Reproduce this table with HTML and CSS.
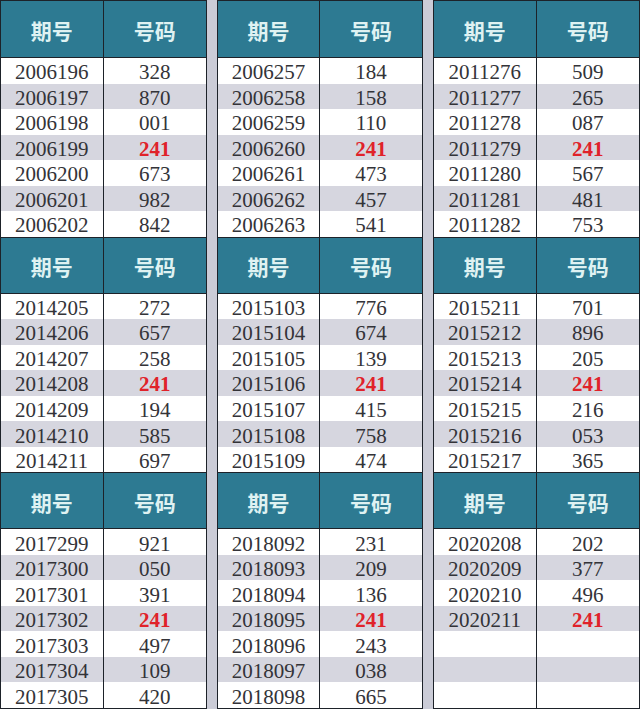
FILE: index.html
```html
<!DOCTYPE html>
<html lang="zh">
<head>
<meta charset="utf-8">
<link rel="stylesheet" href="styles.css">
</head>
<body>
<div class="page">
  <div class="col">
    <div class="block">
      <div class="hd">期号</div><div class="hd">号码</div>
      <div class="c">2006196</div><div class="c">328</div>
      <div class="c g">2006197</div><div class="c g">870</div>
      <div class="c">2006198</div><div class="c">001</div>
      <div class="c g">2006199</div><div class="c g r">241</div>
      <div class="c">2006200</div><div class="c">673</div>
      <div class="c g">2006201</div><div class="c g">982</div>
      <div class="c">2006202</div><div class="c">842</div>
    </div>
    <div class="block">
      <div class="hd">期号</div><div class="hd">号码</div>
      <div class="c">2014205</div><div class="c">272</div>
      <div class="c g">2014206</div><div class="c g">657</div>
      <div class="c">2014207</div><div class="c">258</div>
      <div class="c g">2014208</div><div class="c g r">241</div>
      <div class="c">2014209</div><div class="c">194</div>
      <div class="c g">2014210</div><div class="c g">585</div>
      <div class="c">2014211</div><div class="c">697</div>
    </div>
    <div class="block">
      <div class="hd">期号</div><div class="hd">号码</div>
      <div class="c">2017299</div><div class="c">921</div>
      <div class="c g">2017300</div><div class="c g">050</div>
      <div class="c">2017301</div><div class="c">391</div>
      <div class="c g">2017302</div><div class="c g r">241</div>
      <div class="c">2017303</div><div class="c">497</div>
      <div class="c g">2017304</div><div class="c g">109</div>
      <div class="c">2017305</div><div class="c">420</div>
    </div>
  </div>
  <div class="col mid">
    <div class="block">
      <div class="hd">期号</div><div class="hd">号码</div>
      <div class="c">2006257</div><div class="c">184</div>
      <div class="c g">2006258</div><div class="c g">158</div>
      <div class="c">2006259</div><div class="c">110</div>
      <div class="c g">2006260</div><div class="c g r">241</div>
      <div class="c">2006261</div><div class="c">473</div>
      <div class="c g">2006262</div><div class="c g">457</div>
      <div class="c">2006263</div><div class="c">541</div>
    </div>
    <div class="block">
      <div class="hd">期号</div><div class="hd">号码</div>
      <div class="c">2015103</div><div class="c">776</div>
      <div class="c g">2015104</div><div class="c g">674</div>
      <div class="c">2015105</div><div class="c">139</div>
      <div class="c g">2015106</div><div class="c g r">241</div>
      <div class="c">2015107</div><div class="c">415</div>
      <div class="c g">2015108</div><div class="c g">758</div>
      <div class="c">2015109</div><div class="c">474</div>
    </div>
    <div class="block">
      <div class="hd">期号</div><div class="hd">号码</div>
      <div class="c">2018092</div><div class="c">231</div>
      <div class="c g">2018093</div><div class="c g">209</div>
      <div class="c">2018094</div><div class="c">136</div>
      <div class="c g">2018095</div><div class="c g r">241</div>
      <div class="c">2018096</div><div class="c">243</div>
      <div class="c g">2018097</div><div class="c g">038</div>
      <div class="c">2018098</div><div class="c">665</div>
    </div>
  </div>
  <div class="col">
    <div class="block">
      <div class="hd">期号</div><div class="hd">号码</div>
      <div class="c">2011276</div><div class="c">509</div>
      <div class="c g">2011277</div><div class="c g">265</div>
      <div class="c">2011278</div><div class="c">087</div>
      <div class="c g">2011279</div><div class="c g r">241</div>
      <div class="c">2011280</div><div class="c">567</div>
      <div class="c g">2011281</div><div class="c g">481</div>
      <div class="c">2011282</div><div class="c">753</div>
    </div>
    <div class="block">
      <div class="hd">期号</div><div class="hd">号码</div>
      <div class="c">2015211</div><div class="c">701</div>
      <div class="c g">2015212</div><div class="c g">896</div>
      <div class="c">2015213</div><div class="c">205</div>
      <div class="c g">2015214</div><div class="c g r">241</div>
      <div class="c">2015215</div><div class="c">216</div>
      <div class="c g">2015216</div><div class="c g">053</div>
      <div class="c">2015217</div><div class="c">365</div>
    </div>
    <div class="block">
      <div class="hd">期号</div><div class="hd">号码</div>
      <div class="c">2020208</div><div class="c">202</div>
      <div class="c g">2020209</div><div class="c g">377</div>
      <div class="c">2020210</div><div class="c">496</div>
      <div class="c g">2020211</div><div class="c g r">241</div>
      <div class="c"></div><div class="c"></div>
      <div class="c g"></div><div class="c g"></div>
      <div class="c"></div><div class="c"></div>
    </div>
  </div>
</div>
</body>
</html>
```

FILE: styles.css
```css
html, body {
  margin: 0;
  padding: 0;
  background: #cbccd7;
}
.page {
  width: 640px;
  height: 709px;
  display: grid;
  grid-template-columns: 207px 206px 207px;
  column-gap: 10px;
}
.col {
  display: grid;
  grid-template-rows: repeat(3, 1fr);
  border: 1px solid #1d2229;
  background: #fff;
  min-height: 0;
}
.block {
  display: grid;
  grid-template-columns: 1fr 1fr;
  grid-template-rows: 57px repeat(7, 1fr);
  min-height: 0;
}
.block + .block .hd {
  border-top: 1px solid #1d2229;
}
.hd {
  background: #2d7a92;
  color: #dff2f2;
  font-family: "Noto Sans CJK SC", "Noto Sans", sans-serif;
  font-weight: 700;
  font-size: 21px;
  display: flex;
  align-items: center;
  justify-content: center;
  padding-top: 2px;
  border-bottom: 1px solid #1d2229;
}
.c {
  font-family: "Liberation Serif", "DejaVu Serif", serif;
  font-size: 21px;
  color: #333338;
  display: flex;
  align-items: center;
  justify-content: center;
  background: #fff;
  line-height: 1;
  padding-top: 4px;
}
.hd:nth-child(odd), .c:nth-child(odd) {
  border-right: 1px solid #1d2229;
}
.g {
  background: #d6d6df;
}
.r {
  color: #e0222a;
  font-weight: 700;
}
```
